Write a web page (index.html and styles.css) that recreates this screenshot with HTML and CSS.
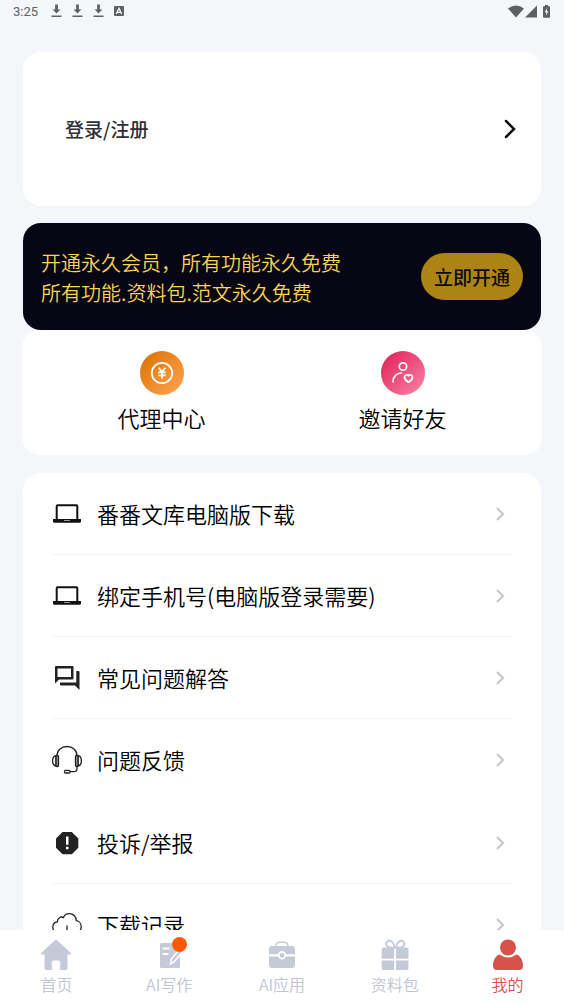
FILE: index.html
```html
<!DOCTYPE html>
<html lang="zh-CN">
<head>
<meta charset="utf-8">
<meta name="viewport" content="width=device-width, initial-scale=1">
<title>我的</title>
<link rel="stylesheet" href="styles.css">
</head>
<body>
<header class="status">
  <span class="status-time">3:25</span>
  <svg class="status-dl" viewBox="0 0 10 14"><path d="M3.600 0.500h2.800v5h2.500L5 9.500 1.100 5.500h2.500zM0 11.600h10v1.400H0z"/></svg>
  <svg class="status-dl" viewBox="0 0 10 14"><path d="M3.600 0.500h2.800v5h2.500L5 9.500 1.100 5.500h2.500zM0 11.600h10v1.400H0z"/></svg>
  <svg class="status-dl" viewBox="0 0 10 14"><path d="M3.600 0.500h2.800v5h2.500L5 9.500 1.100 5.500h2.500zM0 11.600h10v1.400H0z"/></svg>
  <svg class="status-app" viewBox="0 0 10 10"><rect width="10" height="10" rx="1"/><path d="M2.300 8 5 2.200 7.700 8M3.500 6.300h3" fill="none" stroke="#f5f6fa" stroke-width="1.300"/></svg>
  <span class="status-right">
    <svg width="16" height="13" viewBox="0 0 16 13"><path d="M0 3.400Q8-2.600 16 3.400L8 12.500z"/></svg>
    <svg width="12" height="13" viewBox="0 0 12 13"><path d="M12 .5V12.500H0z"/></svg>
    <svg class="battery" width="7" height="13" viewBox="0 0 7 13"><path d="M2 0h3v1.200h1.200q.8 0 .8.8v10q0 .8-.8.8H.8Q0 12.800 0 12V2q0-.8.8-.8H2z"/><path d="M4 3.200 1.700 7.200h1.500v3.300l2.200-4.200H4z" fill="#f5f6fa"/></svg>
  </span>
</header>
<main class="content">
  <a class="card login" href="#login">
    <span class="login-label">登录/注册</span>
    <svg class="login-arrow" viewBox="0 0 12 20"><path d="m2 2 8 8-8 8"/></svg>
  </a>
  <section class="banner">
    <p class="banner-text">开通永久会员，所有功能永久免费<br>所有功能.资料包.范文永久免费</p>
    <button class="banner-btn" type="button">立即开通</button>
  </section>
  <section class="tiles">
    <a class="tile" href="#agent">
      <svg class="tile-icon" viewBox="0 0 44 44">
        <defs><linearGradient id="orange" x1="0" y1="0" x2="1" y2="1"><stop offset=".1" stop-color="#e07508"/><stop offset=".9" stop-color="#fca04a"/></linearGradient></defs>
        <circle cx="22" cy="22" r="22" fill="url(#orange)"/>
        <g fill="none" stroke="#fff" stroke-width="1.800"><circle cx="22" cy="22" r="10.200"/><path d="m18.700 16.800 3.300 4 3.300-4M22 20.800v6.700M18.300 21.300h7.400M18.300 24.300h7.400"/></g>
      </svg>
      <span>代理中心</span>
    </a>
    <a class="tile" href="#invite">
      <svg class="tile-icon" viewBox="0 0 44 44">
        <defs><linearGradient id="pink" x1="0" y1="0" x2="1" y2="1"><stop offset=".1" stop-color="#e4265d"/><stop offset=".9" stop-color="#f67c9e"/></linearGradient></defs>
        <circle cx="22" cy="22" r="22" fill="url(#pink)"/>
        <g fill="none" stroke="#fff" stroke-width="1.700" stroke-linecap="round" stroke-linejoin="round"><circle cx="22" cy="15.500" r="3.700"/><path d="M12 31c0-5.500 3.800-9 8.500-9"/><path d="M27.500 31.300c-2.500-1.500-4-3.100-4-5 0-2.500 2.800-3.300 4-1.500 1.200-1.800 4-1 4 1.500 0 1.900-1.500 3.500-4 5z"/></g>
      </svg>
      <span>邀请好友</span>
    </a>
  </section>
  <nav class="card list">
    <a class="row" href="#desktop">
      <svg class="row-icon" viewBox="0 0 30 30"><path d="M4.700 21V7.300q0-1 1-1h18.600q1 0 1 1V21" fill="none" stroke="#111" stroke-width="2"/><path d="M1 20h28v2.200q0 1.600-1.600 1.600H2.600Q1 23.800 1 22.200z" fill="#111"/><path d="M12 21.500h6" stroke="#999"/></svg>
      <span class="row-label">番番文库电脑版下载</span>
      <svg class="arrow" viewBox="0 0 10 16"><path d="m2 2 6 6-6 6"/></svg>
    </a>
    <a class="row" href="#phone">
      <svg class="row-icon" viewBox="0 0 30 30"><path d="M4.700 21V7.300q0-1 1-1h18.600q1 0 1 1V21" fill="none" stroke="#111" stroke-width="2"/><path d="M1 20h28v2.200q0 1.600-1.600 1.600H2.600Q1 23.800 1 22.200z" fill="#111"/><path d="M12 21.500h6" stroke="#999"/></svg>
      <span class="row-label">绑定手机号(电脑版登录需要)</span>
      <svg class="arrow" viewBox="0 0 10 16"><path d="m2 2 6 6-6 6"/></svg>
    </a>
    <a class="row" href="#faq">
      <svg class="row-icon" viewBox="0 0 30 30" fill="#222"><path fill-rule="evenodd" d="M4 3h16.500q1 0 1 1v11.500q0 1-1 1H7L3 20.500V4q0-1 1-1zm1.500 2.500V14h13.500V5.500z"/><path d="M24.300 8h2.200q1 0 1 1v18l-4.500-4.500H9q-1 0-1-1V19.500h16.300z"/></svg>
      <span class="row-label">常见问题解答</span>
      <svg class="arrow" viewBox="0 0 10 16"><path d="m2 2 6 6-6 6"/></svg>
    </a>
    <a class="row row-plain" href="#feedback">
      <svg class="row-icon" viewBox="0 0 30 30" fill="none" stroke="#222" stroke-width="1.300"><path d="M5 11C5 5 9.500 1.500 15 1.500S25 5 25 11"/><path d="M4 10.700C-.5 11.500-.5 20.300 4 21.200zM26 10.700c4.500.8 4.500 9.600 0 10.500z"/><rect x="4" y="10.500" width="2.500" height="11" rx="1" fill="#999"/><rect x="23.500" y="10.500" width="2.500" height="11" rx="1" fill="#999"/><path d="M25 21.500v2q0 3.200-3.500 3.200H18"/><rect x="12.500" y="25.300" width="5.500" height="2.700" rx="1"/></svg>
      <span class="row-label">问题反馈</span>
      <svg class="arrow" viewBox="0 0 10 16"><path d="m2 2 6 6-6 6"/></svg>
    </a>
    <a class="row" href="#report">
      <svg class="row-icon" viewBox="0 0 30 30"><path d="M10.500 4h9.300l6.500 6.500v9.300l-6.500 6.500h-9.300L4 19.800v-9.300z" fill="#222"/><path d="M14 8.500h2.500v8.300H14zM14 18.800h2.500v2.500H14z" fill="#fff"/></svg>
      <span class="row-label">投诉/举报</span>
      <svg class="arrow" viewBox="0 0 10 16"><path d="m2 2 6 6-6 6"/></svg>
    </a>
    <a class="row" href="#downloads">
      <svg class="row-icon" viewBox="0 0 30 30" fill="none" stroke="#222" stroke-width="1.300"><path d="M9 23H7C3 23 .8 20.300.8 17.300c0-3 2-5.200 4.600-5.500C5.300 8 9 6 11.500 7.600 12.500 5 14.700 3.700 17.300 3.700c4.200 0 7 3 7 7 2.700.3 4.900 2.700 4.900 6 0 3.500-2.500 6.300-6.200 6.300h-2"/><path d="M15 15.500V28m-3.500-3.500L15 28l3.500-3.500"/></svg>
      <span class="row-label">下载记录</span>
      <svg class="arrow" viewBox="0 0 10 16"><path d="m2 2 6 6-6 6"/></svg>
    </a>
  </nav>
</main>
<nav class="tabs">
  <a class="tab" href="#home">
    <svg class="tab-icon" viewBox="0 0 32 32"><path d="M14.700 1.500q1.300-1.100 2.600 0l13.400 12.200q.9 1.300-.6 1.800h-2.600V29q0 2-2 2h-5.300v-7.500q0-2-2-2h-4.400q-2 0-2 2V31H6.500q-2 0-2-2V15.500H1.900q-1.500-.5-.6-1.800z"/></svg>
    <span>首页</span>
  </a>
  <a class="tab" href="#write">
    <span class="tab-badged">
      <svg class="tab-icon" viewBox="0 0 32 32"><path d="M8.500 4h17q1.500 0 1.500 1.500v22q0 1.500-1.500 1.500h-17Q7 29 7 27.500v-22Q7 4 8.500 4z"/><path d="M9.500 9.500h7M9.500 15h6" stroke="#fff" stroke-width="2"/><path d="m17.500 25 .8-5L29 7l3 3-11 13z" stroke="#fff" stroke-width="1.500"/></svg>
      <span class="badge"></span>
    </span>
    <span>AI写作</span>
  </a>
  <a class="tab" href="#apps">
    <svg class="tab-icon" viewBox="0 0 32 32"><path d="M10 7.500q0-4.200 4-4.200h4q4 0 4 4.200" fill="none" stroke="#c5cad9" stroke-width="1.400"/><path d="M6 7h20q3 0 3 3v5.300h-9q-1.300-3.300-4-3.300t-4 3.300H3V10q0-3 3-3zM3 17.500h9q1.300 3 4 3t4-3h9V26q0 3-3 3H6q-3 0-3-3z"/><circle cx="16" cy="16.400" r="2.300"/></svg>
    <span>AI应用</span>
  </a>
  <a class="tab" href="#packs">
    <svg class="tab-icon" viewBox="0 0 32 32"><path d="M4.500 8.500h10.700v11.300H2.700v-9.500q0-1.800 1.800-1.800zM17 8.500h10.700q1.800 0 1.800 1.800v9.500H17zM2.700 21.500h12.500V31H4.500q-1.800 0-1.800-1.800zM17 21.500h12.500v7.700q0 1.800-1.800 1.800H17z"/><path d="M15.500 8.500C6 9.500 6 3.500 9 2c3-1.200 6 2 6.500 6.500zm1.500 0c9.500 1 9.500-5 6.500-6.500-3-1.200-6 2-6.500 6.500z" fill="none" stroke="#c5cad9" stroke-width="1.900"/></svg>
    <span>资料包</span>
  </a>
  <a class="tab tab-active" href="#mine" aria-current="page">
    <svg class="tab-icon" viewBox="0 0 32 32"><circle cx="16" cy="8.500" r="8"/><path d="M7.500 15.500Q16 21.500 24.500 15.500c4 1 6.500 6 6.500 11.500q0 4-4 4H5q-4 0-4-4c0-5.500 2.500-10.500 6.500-11.500z"/></svg>
    <span>我的</span>
  </a>
</nav>
</body>
</html>
```

FILE: styles.css
```css
* { box-sizing: border-box; }

body {
  margin: 0;
  height: 100vh;
  display: flex;
  flex-direction: column;
  background: #f5f6fa;
  color: #000;
  font-family: "Noto Sans CJK SC", sans-serif;
  font-weight: 350;
}

a { color: inherit; text-decoration: none; }
svg { display: block; flex: none; }

.status {
  flex: none;
  height: 24px;
  display: flex;
  align-items: center;
  padding: 0 14px 2px 13px;
  color: #5f6064;
  fill: #5f6064;
}
.status-time { font: 13px Roboto, sans-serif; margin-right: 13px; }
.status-dl { width: 11px; height: 14px; margin-right: 10px; }
.status-app { width: 10px; height: 10px; }
.status-right { display: flex; gap: 1px; margin-left: auto; }
.battery { margin-left: 5px; }

.content {
  flex: 1;
  min-height: 0;
  overflow-y: auto;
  scrollbar-width: none;
  padding: 28px 23px 0;
}

.card { background: #fff; border-radius: 18px; }

.login {
  display: flex;
  align-items: center;
  justify-content: space-between;
  height: 154px;
  padding: 0 25px 0 42px;
  font-size: 19px;
  font-weight: 500;
  color: #302e38;
}
.login-label { padding-bottom: 2px; }
.login-arrow { width: 12px; height: 20px; }
.login-arrow path {
  fill: none;
  stroke: #111;
  stroke-width: 2.5;
  stroke-linecap: round;
}

.banner {
  display: flex;
  align-items: center;
  justify-content: space-between;
  margin-top: 17px;
  height: 107px;
  padding: 0 18px;
  border-radius: 18px;
  background: #060614;
}
.banner-text {
  margin: 0;
  padding-top: 2px;
  font-size: 20px;
  line-height: 30px;
  color: #f8d355;
}
.banner-btn {
  width: 102px;
  height: 47px;
  padding: 0;
  border: 0;
  border-radius: 24px;
  background: #ae8315;
  color: #0c0a08;
  font: 500 19px "Noto Sans CJK SC", sans-serif;
}

.tiles {
  display: flex;
  margin: 0 -1px;
  height: 125px;
  padding: 21px 19px 0;
  border-radius: 18px;
  background: #fff;
}
.tile {
  flex: 1;
  display: flex;
  flex-direction: column;
  align-items: center;
  gap: 6px;
  font-size: 22px;
  line-height: 32px;
}
.tile-icon { width: 44px; height: 44px; }

.list { margin-top: 18px; padding: 0 29px; }
.row {
  display: flex;
  align-items: center;
  height: 82px;
  padding-right: 7px;
  border-bottom: 1px solid #f3f3f5;
}
.row-plain { height: 83px; border-bottom-color: transparent; }
.row-icon { width: 30px; height: 30px; }
.row-label {
  flex: 1;
  margin-left: 15px;
  padding-bottom: 2px;
  font-size: 22px;
}
.arrow { width: 10px; height: 16px; }
.arrow path { fill: none; stroke: #c4c5ca; stroke-width: 2; }

.tabs {
  flex: none;
  display: flex;
  height: 74px;
  padding-top: 9px;
  background: #fff;
}
.tab {
  flex: 1;
  display: flex;
  flex-direction: column;
  align-items: center;
  gap: 1px;
  font-size: 16px;
  line-height: 24px;
  color: #bfc4d5;
  fill: #c5cad9;
}
.tab-active { color: #d5534b; fill: #d5534b; }
.tab-icon { width: 32px; height: 32px; }
.tab-badged { position: relative; }
.badge {
  position: absolute;
  top: -2px;
  right: -2px;
  width: 15px;
  height: 15px;
  border-radius: 50%;
  background: #ff5808;
}
```
